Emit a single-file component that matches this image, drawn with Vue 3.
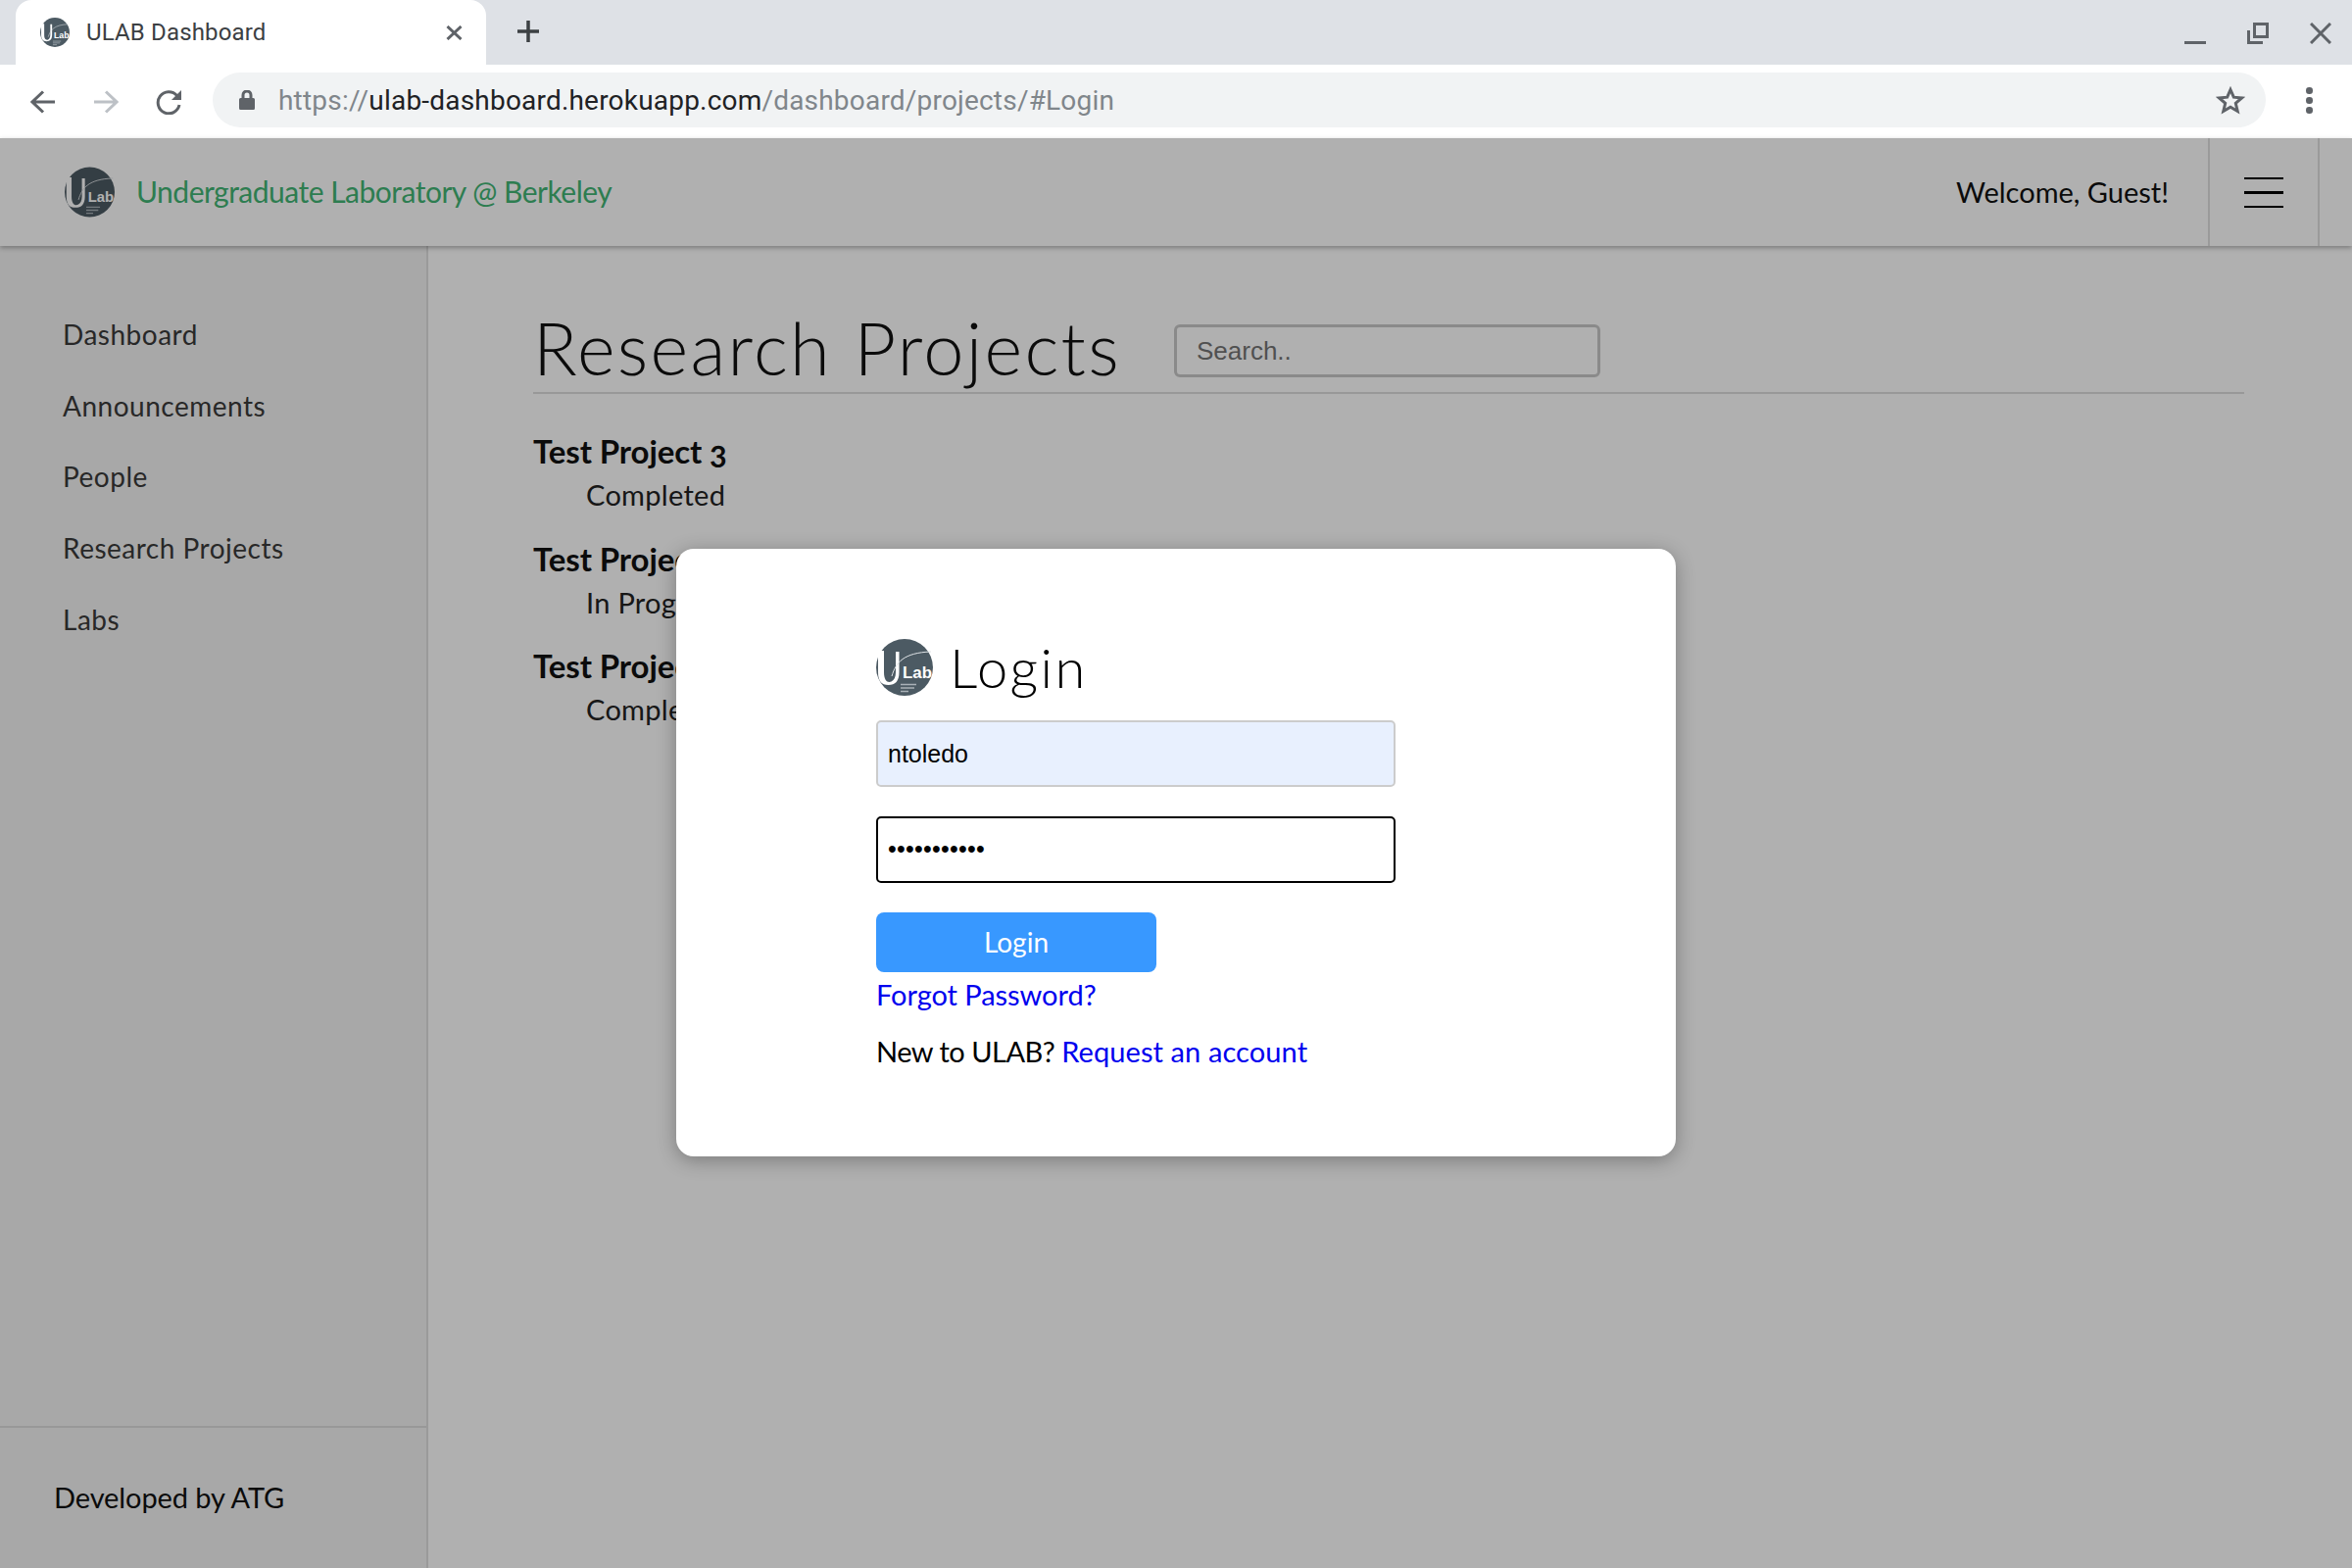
<script setup>
const navItems = ['Dashboard', 'Announcements', 'People', 'Research Projects', 'Labs']
const projects = [
  { name: 'Test Project 3', status: 'Completed' },
  { name: 'Test Project 2', status: 'In Progress' },
  { name: 'Test Project 1', status: 'Completed' }
]
</script>

<template>
  <div class="root">
    <div class="tabstrip">
      <div class="tab">
        <svg class="logo-tab" viewBox="0 0 58 58"><use href="#ulab" /></svg>
        <span class="tab-title">ULAB Dashboard</span>
        <svg class="tab-x" viewBox="0 0 17 15"><path d="M1.500 1 15.500 14M15.500 1 1.500 14" /></svg>
      </div>
      <svg class="plus" viewBox="0 0 24 24"><path d="M12 1v22M1 12h22" /></svg>
      <div class="winbtns">
        <svg class="win" viewBox="0 0 22 22"><path d="M0 20.500h22" /></svg>
        <svg class="win" viewBox="0 0 22 22"><path d="M1.500 8v12.500H16M7.500 1.500h13v13h-13z" /></svg>
        <svg class="win" viewBox="0 0 22 22"><path d="M1 1l20 20M21 1 1 21" /></svg>
      </div>
    </div>

    <div class="toolbar">
      <svg class="nav-ic" viewBox="0 0 26 24"><path d="M25 12H3M13 1.500 2 12l11 10.500" /></svg>
      <svg class="nav-ic fwd" viewBox="0 0 26 24"><path d="M1 12h22M13 1.500 24 12 13 22.500" /></svg>
      <svg class="nav-ic reload" viewBox="0 0 28 26"><path d="M22.500 6.500A11 11 0 1 0 25 16" /><path class="solid" d="M27 1v10H17z" /></svg>
      <div class="omnibox">
        <svg class="lock" viewBox="0 0 16 20"><path class="solid" d="M1.500 8h13a1.500 1.500 0 0 1 1.500 1.500v9a1.500 1.500 0 0 1-1.500 1.500h-13A1.500 1.500 0 0 1 0 18.500v-9A1.500 1.500 0 0 1 1.500 8z" /><path d="M4 8V5a4 4 0 0 1 8 0v3" /></svg>
        <span class="url"><span class="dim">https://</span>ulab-dashboard.herokuapp.com<span class="dim">/dashboard/projects/#Login</span></span>
        <svg class="star" viewBox="0 0 30 29"><path d="M15 3.500l3.300 7.700 8.300.7-6.300 5.500 1.900 8.100L15 21.200 7.800 25.500l1.900-8.100-6.300-5.500 8.300-.7z" /></svg>
      </div>
      <div class="dots"><i></i><i></i><i></i></div>
    </div>

    <div class="page">
      <header class="app-header">
        <svg class="logo-head" viewBox="0 0 58 58">
          <defs>
            <g id="ulab">
              <circle cx="29" cy="29" r="29" fill="#4c5a63" />
              <path class="lg-u" d="M2 12h6v22c0 9 4 11 7.500 9.500 3-1.500 4.500-5 4.500-9.500V13h3.500v21c0 9-4 13-11 13S2 43 2 34z" />
              <path class="lg-s" d="M16 38C20 24 28 14 56 13" />
              <text x="27" y="40" font-family="Liberation Sans, sans-serif" font-weight="700" font-size="17" textLength="30" lengthAdjust="spacingAndGlyphs" fill="#fff">Lab</text>
              <path class="lg-f" d="M25 46.500h16M25 50h14M25 53.500h8" />
            </g>
          </defs>
          <use href="#ulab" />
        </svg>
        <span class="brand">Undergraduate Laboratory @ Berkeley</span>
        <span class="welcome">Welcome, Guest!</span>
        <div class="burger-cell">
          <div class="burger"><i></i><i class="thick"></i><i></i></div>
        </div>
      </header>

      <div class="body">
        <aside class="sidebar">
          <nav class="nav">
            <a v-for="item in navItems" :key="item" class="nav-item">{{ item }}</a>
          </nav>
          <div class="dev">Developed by ATG</div>
        </aside>
        <main class="main">
          <div class="title-row">
            <h1 class="title">Research Projects</h1>
            <div class="search">Search..</div>
          </div>
          <div v-for="p in projects" :key="p.name" class="project">
            <div class="p-name">{{ p.name }}</div>
            <div class="p-status">{{ p.status }}</div>
          </div>
        </main>
      </div>

      <div class="overlay">
        <div class="modal">
          <div class="login-head">
            <svg class="logo-modal" viewBox="0 0 58 58"><use href="#ulab" /></svg>
            <span class="login-title">Login</span>
          </div>
          <div class="field autofill">ntoledo</div>
          <div class="field focus">•••••••••••</div>
          <button class="btn">Login</button>
          <a class="link forgot">Forgot Password?</a>
          <p class="newto">New to ULAB? <a class="link">Request an account</a></p>
        </div>
      </div>
    </div>
  </div>
</template>

<style>
html, body { margin: 0; padding: 0; background: #fff; }
</style>

<style scoped>
.root { width: 2400px; height: 1600px; display: flex; flex-direction: column; overflow: hidden; font-family: Lato, "Open Sans", sans-serif; }
svg path { fill: none; stroke: #5f6368; stroke-width: 3; }
svg path.solid { fill: #5f6368; stroke: none; }
svg path.lg-u { fill: #fff; stroke: none; }
svg path.lg-s { stroke: #dfe3e6; stroke-width: 1; }
svg path.lg-f { stroke: #a9b1b7; stroke-width: 1.500; }
.tabstrip { height: 66px; background: #dee1e6; display: flex; align-items: center; padding-left: 16px; box-sizing: border-box; flex: none; }
.tab { width: 480px; height: 66px; background: #fff; border-radius: 16px 16px 0 0; display: flex; align-items: center; padding-left: 25px; box-sizing: border-box; }
.logo-tab { width: 30px; height: 30px; }
.tab-title { margin-left: 17px; font: 400 24px Roboto, sans-serif; color: #3c4043; letter-spacing: .15px; }
.tab-x { width: 17px; height: 15px; margin-left: auto; margin-right: 24px; }
.tab-x path { stroke-width: 3; }
.plus { width: 24px; height: 24px; margin-left: 31px; margin-top: -2px; }
.plus path { stroke: #3c4043; stroke-width: 3.500; }
.winbtns { margin-left: auto; display: flex; gap: 42px; margin-right: 21px; margin-top: 1px; }
.win { width: 22px; height: 22px; }
.toolbar { height: 75px; background: #fff; display: flex; align-items: center; position: relative; flex: none; padding-left: 31px; box-sizing: border-box; }
.nav-ic { width: 26px; height: 24px; }
.fwd { margin-left: 38px; }
.fwd path { stroke: #bdc1c6; }
.reload { width: 28px; height: 26px; margin-left: 37px; }
.omnibox { position: absolute; left: 217px; top: 8px; width: 2095px; height: 56px; background: #f1f3f4; border-radius: 28px; display: flex; align-items: center; box-sizing: border-box; padding-left: 27px; }
.lock { width: 16px; height: 20px; }
.url { margin-left: 24px; font: 400 28px Roboto, sans-serif; color: #202124; letter-spacing: .2px; }
.dim { color: #80868b; }
.star { width: 30px; height: 29px; margin-left: auto; margin-right: 21px; }
.dots { position: absolute; left: 2353px; top: 23px; display: flex; flex-direction: column; gap: 3.500px; }
.dots i { width: 6.500px; height: 6.500px; border-radius: 50%; background: #5f6368; display: block; }

.page { flex: 1; position: relative; display: flex; flex-direction: column; min-height: 0; background: #fff; }
.app-header { height: 110px; flex: none; display: flex; align-items: center; position: relative; z-index: 1; background: #fff; box-shadow: 0 2px 5px rgba(0,0,0,.3); padding-left: 66px; box-sizing: border-box; }
.logo-head { width: 51px; height: 52px; }
.brand { margin-left: 22px; font-size: 30px; font-weight: 400; color: #42b574; letter-spacing: -.5px; margin-top: -2px; }
.welcome { margin-left: auto; font-size: 29px; color: #111; font-weight: 400; margin-right: 40px; margin-top: -2px; }
.burger-cell { width: 110px; height: 110px; border-left: 2px solid #e0e0e0; border-right: 2px solid #e0e0e0; margin-right: 33px; display: flex; align-items: center; justify-content: center; box-sizing: content-box; }
.burger { width: 40px; display: flex; flex-direction: column; gap: 12px; }
.burger i { display: block; height: 2px; background: #000; }
.burger i.thick { height: 3px; }

.body { flex: 1; display: flex; min-height: 0; }
.sidebar { width: 437px; box-sizing: border-box; flex: none; background: #f4f4f4; border-right: 2px solid #e0e0e0; display: flex; flex-direction: column; }
.nav { flex: 1; padding: 73px 0 0 64px; display: flex; flex-direction: column; gap: 38.700px; }
.nav-item { font-size: 28px; line-height: 34px; color: #3a3a3a; font-weight: 400; letter-spacing: .5px; }
.dev { height: 145px; flex: none; border-top: 2px solid #dcdcdc; box-sizing: border-box; padding: 53px 0 0 55px; font-size: 29px; line-height: 36px; color: #111; letter-spacing: -.1px; }
.main { flex: 1; padding: 64px 110px 0 107px; }
.title-row { display: flex; align-items: center; height: 85px; border-bottom: 2px solid #dcdcdc; }
.title { margin: 0 0 6px; font-size: 74px; font-weight: 300; color: #111; line-height: 84px; letter-spacing: 2.300px; }
.search { width: 435px; height: 54px; box-sizing: border-box; margin-left: 54px; border: 3px solid #c8c8c8; border-radius: 6px; font: 400 26px "Liberation Sans", sans-serif; color: #757575; padding-left: 20px; line-height: 48px; }
.project { height: 109.500px; }
.title-row + .project { margin-top: 38px; }
.p-name { font-size: 33px; font-weight: 700; color: #111; line-height: 40px; letter-spacing: -.1px; font-variant-numeric: oldstyle-nums; }
.p-status { font-size: 29px; color: #222; line-height: 36px; padding-left: 54px; margin-top: 7px; letter-spacing: .3px; }

.overlay { position: absolute; inset: 0; background: rgba(0,0,0,.31); z-index: 5; display: flex; align-items: center; justify-content: center; padding-bottom: 2px; }
.modal { width: 1020px; height: 620px; background: #fff; border-radius: 18px; box-shadow: 0 4px 20px rgba(0,0,0,.3); box-sizing: border-box; padding: 92px 0 0 204px; }
.login-head { display: flex; align-items: center; height: 58px; }
.logo-modal { width: 58px; height: 58px; }
.login-title { margin-left: 17px; font-size: 56px; font-weight: 300; color: #000; letter-spacing: 2.400px; }
.field { width: 530px; height: 68px; box-sizing: border-box; border-radius: 5px; font: 400 25px/64px "Liberation Sans", sans-serif; color: #000; padding-left: 10px; }
.autofill { margin-top: 25px; background: #e8f0fe; border: 2px solid #ccc; }
.focus { margin-top: 30px; border: 2px solid #000; line-height: 62px; letter-spacing: .25px; }
.btn { display: block; margin-top: 30px; width: 286px; height: 61px; background: #3898ff; color: #fff; border: 0; border-radius: 8px; font-family: inherit; font-size: 28px; font-weight: 400; }
.link { color: #0000ee; }
.forgot { display: block; font-size: 29px; line-height: 36px; margin-top: 5px; letter-spacing: -.05px; }
.newto { margin: 22px 0 0; font-size: 29px; line-height: 36px; color: #000; letter-spacing: -.5px; }
.newto .link { letter-spacing: .1px; }
</style>
